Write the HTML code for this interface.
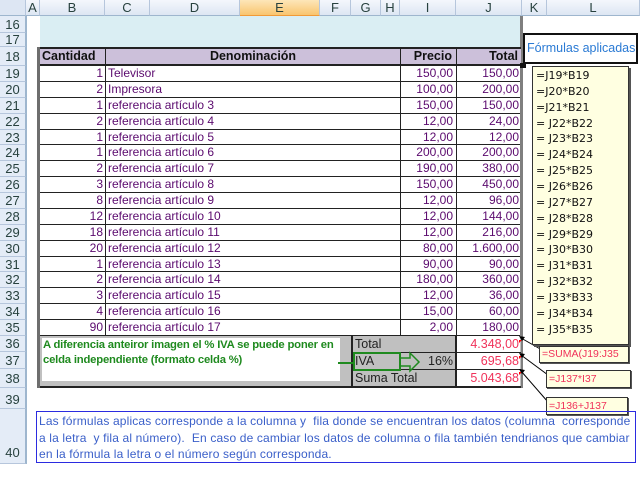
<!DOCTYPE html>
<html><head><meta charset="utf-8"><style>
*{margin:0;padding:0;box-sizing:border-box}
body{width:640px;height:464px;overflow:hidden;background:#fff;font-family:"Liberation Sans",Arial,sans-serif;font-size:12px;position:relative}
.a{position:absolute}
.ch{position:absolute;top:0;height:16px;background:linear-gradient(#f4f7fc,#dde6f3);border-right:1px solid #b6c6dc;border-bottom:1px solid #9eb6ce;text-align:center;line-height:16px;font-size:13px;color:#27413e}
.rh{position:absolute;left:0;width:26px;background:#e4ecf7;border-bottom:1px solid #b6c6dc;border-right:1px solid #9eb6ce;text-align:center;font-size:13px;color:#27413e}
.r{position:absolute;left:40px;width:480px;border-bottom:1px solid #222;background:#fff;line-height:15px;font-size:12px;color:#5b0a6e}
.r span{position:absolute;top:0;height:100%}
.n{position:absolute;left:536px;color:#111;font-family:"DejaVu Sans",sans-serif;font-size:11px}
</style></head><body>
<div class="ch" style="left:0;width:26px;background:#dde6f3"></div>
<div class="ch" style="left:26px;width:14px">A</div>
<div class="ch" style="left:40px;width:65px">B</div>
<div class="ch" style="left:105px;width:45px">C</div>
<div class="ch" style="left:150px;width:90px">D</div>
<div class="ch" style="left:240px;width:80px;background:linear-gradient(#fde6b9,#f9c56f);border-bottom:1px solid #f29a36">E</div>
<div class="ch" style="left:320px;width:31px">F</div>
<div class="ch" style="left:351px;width:30px">G</div>
<div class="ch" style="left:381px;width:19px">H</div>
<div class="ch" style="left:400px;width:56px">I</div>
<div class="ch" style="left:456px;width:66px">J</div>
<div class="ch" style="left:522px;width:25px">K</div>
<div class="ch" style="left:547px;width:93px">L</div>
<div class="a" style="left:26px;top:16px;width:1px;height:448px;background:#9eb6ce"></div>
<div class="rh" style="top:16px;height:17px;line-height:17px">16</div>
<div class="rh" style="top:33px;height:14px;line-height:14px">17</div>
<div class="rh" style="top:47px;height:19px;line-height:19px">18</div>
<div id="rhs"></div>
<div class="rh" style="top:336px;height:16px;line-height:16px">36</div>
<div class="rh" style="top:352px;height:17px;line-height:17px">37</div>
<div class="rh" style="top:369px;height:19px;line-height:19px">38</div>
<div class="rh" style="top:388px;height:21px;line-height:24px">39</div>
<div class="rh" style="top:409px;height:55px;line-height:88px">40</div>
<div class="a" style="left:40px;top:16px;width:481px;height:31px;background:#daeef3"></div>
<div class="a" style="left:520px;top:16px;width:3px;height:372px;background:#7f7f7f"></div>
<div class="a" style="left:37px;top:47px;width:4px;height:341px;background:#6e6e6e"></div>
<div class="a" style="left:40px;top:47px;width:481px;height:19px;background:#ccc0da;border-top:2px solid #222;border-bottom:2px solid #222;font-weight:bold;color:#111;font-size:12.5px;line-height:15px">
<span class="a" style="left:2px">Cantidad</span>
<span class="a" style="left:65px;width:295px;text-align:center;border-left:1px solid #222;height:15px">Denominación</span>
<span class="a" style="left:360px;width:56px;text-align:right;padding-right:4px;border-left:1px solid #222;height:15px">Precio</span>
<span class="a" style="left:416px;width:64px;text-align:right;padding-right:2px;border-left:1px solid #222;height:15px">Total</span>
</div>
<div id="rows"></div>
<div class="a" style="left:40px;top:336px;width:481px;height:52px;background:#c0c0c0;border-bottom:2px solid #222"></div>
<div class="a" style="left:42px;top:338px;width:298px;height:43px;background:#fff;color:#1f8a1f;font-weight:bold;font-size:11.3px;line-height:15px;padding-left:1px;letter-spacing:-0.2px">A diferencia anteiror imagen el % IVA se puede poner en celda independiente (formato celda %)</div>
<div class="a" style="left:351px;top:336px;width:2px;height:50px;background:#222"></div>
<div class="a" style="left:455px;top:336px;width:2px;height:50px;background:#222"></div>
<div class="a" style="left:353px;top:352px;width:168px;height:1px;background:#222"></div>
<div class="a" style="left:353px;top:369px;width:168px;height:1px;background:#222"></div>
<div class="a" style="left:457px;top:336px;width:63px;height:50px;background:#fff"></div>
<div class="a" style="left:457px;top:352px;width:63px;height:1px;background:#222"></div>
<div class="a" style="left:457px;top:369px;width:63px;height:1px;background:#222"></div>
<div class="a" style="left:355px;top:337px;font-size:12.5px;color:#222">Total</div>
<div class="a" style="left:355px;top:354px;font-size:12.5px;color:#222">IVA</div>
<div class="a" style="left:428px;top:354px;font-size:12.5px;color:#222">16%</div>
<div class="a" style="left:355px;top:371px;font-size:12.5px;color:#222">Suma Total</div>
<div class="a" style="left:457px;top:337px;width:62px;text-align:right;font-size:12.5px;color:#f0325a">4.348,00</div>
<div class="a" style="left:457px;top:354px;width:62px;text-align:right;font-size:12.5px;color:#f0325a">695,68</div>
<div class="a" style="left:457px;top:371px;width:62px;text-align:right;font-size:12.5px;color:#f0325a">5.043,68</div>
<svg class="a" style="left:330px;top:340px" width="200" height="80">
<rect x="24" y="13" width="46" height="17" fill="none" stroke="#1f8a1f" stroke-width="2"/>
<line x1="8" y1="23" x2="24" y2="23" stroke="#1f8a1f" stroke-width="2"/>
<path d="M70 18 H80 V13 L89 22 L80 31 V26 H70" fill="none" stroke="#1f8a1f" stroke-width="1.5"/>
<path d="M189 0 l3 0 l-3 3z" fill="red"/><path d="M189 16 l3 0 l-3 3z" fill="red"/><path d="M189 32 l3 0 l-3 3z" fill="red"/>
</svg>
<svg class="a" style="left:518px;top:330px" width="122" height="90">
<path d="M3 8 L24 20" stroke="#000"/><path d="M3 25 L30 45" stroke="#000"/><path d="M3 41 L30 72" stroke="#000"/>
<path d="M1 6 l6 1 l-3 4z M1 23 l6 1 l-3 4z M1 39 l6 1 l-3 4z" fill="#000"/>
</svg>
<div class="a" style="left:523px;top:33px;width:115px;height:31px;border:2px solid #111;background:#fff;color:#2a7ad4;font-size:12.5px;line-height:26px;padding-left:2px">Fórmulas aplicadas</div>
<div class="a" style="left:520px;top:63px;width:6px;height:5px;background:#111"></div>
<div class="a" style="left:532px;top:66px;width:97px;height:279px;background:#ffffe1;border:1px solid #333;box-shadow:2px 2px 0 #555"></div>
<div id="notes"></div>
<div class="a" style="left:539px;top:346px;width:90px;height:17px;background:#ffffe1;border:1px solid #333;box-shadow:1px 1px 0 #555;color:#f0325a;font-size:10.5px;line-height:15px;padding-left:2px;overflow:hidden;white-space:nowrap">=SUMA(J19:J35</div>
<div class="a" style="left:546px;top:370px;width:85px;height:18px;background:#ffffe1;border:1px solid #333;box-shadow:1px 1px 0 #555;color:#f0325a;font-size:10.5px;line-height:16px;padding-left:2px">=J137*I37</div>
<div class="a" style="left:546px;top:397px;width:82px;height:18px;background:#ffffe1;border:1px solid #333;box-shadow:1px 1px 0 #555;color:#f0325a;font-size:10.5px;line-height:16px;padding-left:2px">=J136+J137</div>
<div class="a" style="left:36px;top:411px;width:600px;height:52px;border:1px solid #2b2be0;color:#3a5fc9;font-size:12px;line-height:16.5px;padding:1px 2px;letter-spacing:0.15px">Las fórmulas aplicas corresponde a la columna y&nbsp; fila donde se encuentran los datos (columna&nbsp; corresponde a la letra&nbsp; y fila al número).&nbsp; En caso de cambiar los datos de columna o fila también tendrianos que cambiar en la fórmula la letra o el número según corresponda.</div>
<script>
var d=[[1,"Televisor","150,00","150,00"],[2,"Impresora","100,00","200,00"],[1,"referencia artículo 3","150,00","150,00"],[2,"referencia artículo 4","12,00","24,00"],[1,"referencia artículo 5","12,00","12,00"],[1,"referencia artículo 6","200,00","200,00"],[2,"referencia artículo 7","190,00","380,00"],[3,"referencia artículo 8","150,00","450,00"],[8,"referencia artículo 9","12,00","96,00"],[12,"referencia artículo 10","12,00","144,00"],[18,"referencia artículo 11","12,00","216,00"],[20,"referencia artículo 12","80,00","1.600,00"],[1,"referencia artículo 13","90,00","90,00"],[2,"referencia artículo 14","180,00","360,00"],[3,"referencia artículo 15","12,00","36,00"],[4,"referencia artículo 16","15,00","60,00"],[90,"referencia artículo 17","2,00","180,00"]];
var h="",rh="",nt="";
for(var i=0;i<17;i++){var t=Math.round(66+i*15.88),b=Math.round(66+(i+1)*15.88),hh=b-t;
h+='<div class="r" style="top:'+t+'px;height:'+hh+'px"><span style="left:0;width:63px;text-align:right">'+d[i][0]+'</span><span style="left:65px;border-left:1px solid #222;padding-left:2px;width:295px">'+d[i][1]+'</span><span style="left:360px;width:56px;border-left:1px solid #222;text-align:right;padding-right:3px">'+d[i][2]+'</span><span style="left:416px;width:64px;border-left:1px solid #222;text-align:right;padding-right:1px">'+d[i][3]+'</span></div>';
rh+='<div class="rh" style="top:'+t+'px;height:'+hh+'px;line-height:'+hh+'px">'+(19+i)+'</div>';
var r=19+i;nt+='<div class="n" style="top:'+Math.round(69+i*15.85)+'px">'+(i<3?'=J'+r+'*B'+r:'= J'+r+'*B'+r)+'</div>';}
document.getElementById("rows").innerHTML=h;document.getElementById("rhs").innerHTML=rh;document.getElementById("notes").innerHTML=nt;
</script>
</body></html>
